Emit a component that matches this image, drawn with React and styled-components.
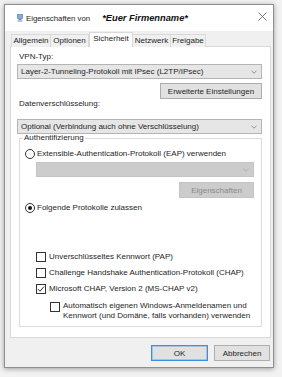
import React from "react";
import styled, { createGlobalStyle } from "styled-components";

const GlobalStyle = createGlobalStyle`
  html, body {
    margin: 0;
    padding: 0;
    background: #f2f2f2;
  }
  body {
    font-family: "Liberation Sans", Arial, sans-serif;
    font-size: 8px;
    color: #1e1e1e;
  }
`;

const Page = styled.div`
  width: 282px;
  height: 377px;
  padding: 4px 0 0 4px;
  box-sizing: border-box;
`;

const Window = styled.div`
  width: 270px;
  height: 364px;
  box-sizing: border-box;
  border: 1px solid #8f8f8f;
  box-shadow: 0 1px 5px rgba(0, 0, 0, 0.35);
  display: flex;
  flex-direction: column;
  background: #f0f0f0;
`;

const TitleBar = styled.div`
  height: 26px;
  background: #fff;
  display: flex;
  align-items: center;
  padding-left: 12px;
`;

const TitleText = styled.span`
  font-size: 7.8px;
  color: #222;
  margin-left: 3px;
`;

const TitleName = styled.span`
  font-size: 9.3px;
  font-weight: bold;
  font-style: italic;
  color: #111;
  margin-left: 12px;
`;

const CloseBox = styled.div`
  margin-left: auto;
  margin-right: 6px;
  align-self: flex-start;
  margin-top: 7px;
  width: 9px;
  height: 9px;
  display: flex;
`;

const Body = styled.div`
  flex: 1;
  display: flex;
  flex-direction: column;
  padding: 0 2px 5px 5px;
`;

const TabRow = styled.div`
  display: flex;
  align-items: flex-end;
  height: 16px;
  margin: 0 0 -1px 1px;
`;

const Tab = styled.div`
  width: ${p => p.$w}px;
  height: ${p => (p.$active ? 15 : 13)}px;
  box-sizing: border-box;
  border: 1px solid #d9d9d9;
  border-bottom: none;
  border-left: ${p => (p.$first || p.$active ? "1px solid #d9d9d9" : "none")};
  background: ${p => (p.$active ? "#fff" : "#f0f0f0")};
  position: ${p => (p.$active ? "relative" : "static")};
  z-index: ${p => (p.$active ? 1 : 0)};
  display: flex;
  align-items: center;
  justify-content: center;
  line-height: 10px;
  padding-bottom: ${p => (p.$active ? 2 : 0)}px;
  white-space: nowrap;
`;

const Panel = styled.div`
  width: 261px;
  box-sizing: border-box;
  background: #fff;
  border: 1px solid #d9d9d9;
  padding: 5px 8px 10px 6px;
  display: flex;
  flex-direction: column;
`;

const Label = styled.div`
  line-height: 10px;
  margin-left: 2px;
  margin-top: ${p => p.$mt || 0}px;
`;

const Combo = styled.div`
  height: 15px;
  box-sizing: border-box;
  margin-top: ${p => p.$mt || 0}px;
  margin-left: ${p => p.$ml || 0}px;
  width: ${p => (p.$w ? p.$w + "px" : "auto")};
  background: ${p => (p.$disabled ? "#cccccc" : "#e6e6e6")};
  border: 1px solid ${p => (p.$disabled ? "#c4c4c4" : "#b4b4b4")};
  display: flex;
  align-items: center;
  padding: 0 4px 0 3px;
  line-height: 10px;
  white-space: nowrap;
`;

const ComboText = styled.span`
  flex: 1;
`;

const Button = styled.div`
  height: 16px;
  width: ${p => p.$w}px;
  box-sizing: border-box;
  background: ${p => (p.$disabled ? "#cccccc" : "#e1e1e1")};
  color: ${p => (p.$disabled ? "#8a8a8a" : "#1e1e1e")};
  border: 1px solid ${p => (p.$default ? "#3c8ee0" : p.$disabled ? "#c4c4c4" : "#adadad")};
  box-shadow: ${p => (p.$default ? "inset 0 0 0 0.5px #6fa9e6" : "none")};
  display: flex;
  align-items: center;
  justify-content: center;
  align-self: flex-end;
  margin-top: ${p => p.$mt || 0}px;
  margin-right: ${p => p.$mr || 0}px;
  white-space: nowrap;
`;

const Group = styled.fieldset`
  margin: 0 0 0 2px;
  padding: 0 0 5px 0;
  border: 1px solid #dcdcdc;
  display: flex;
  flex-direction: column;
  min-width: 0;
`;

const Legend = styled.legend`
  margin-left: 3px;
  padding: 0 1px;
  line-height: 8px;
`;

const Row = styled.div`
  display: flex;
  align-items: ${p => (p.$top ? "flex-start" : "center")};
  height: ${p => p.$h || 10}px;
  margin-top: ${p => p.$mt || 0}px;
  margin-left: ${p => p.$ml || 0}px;
  line-height: 10px;
  white-space: nowrap;
`;

const Radio = styled.span`
  width: 10px;
  height: 10px;
  box-sizing: border-box;
  border: 1px solid #333;
  border-radius: 50%;
  margin-right: 2px;
  display: flex;
  align-items: center;
  justify-content: center;
  flex-shrink: 0;
  &::after {
    content: "";
    width: 4px;
    height: 4px;
    border-radius: 50%;
    background: ${p => (p.$checked ? "#111" : "transparent")};
  }
`;

const Check = styled.span`
  width: 10px;
  height: 10px;
  box-sizing: border-box;
  border: 1px solid #333;
  margin-right: 3px;
  margin-top: ${p => p.$mt || 0}px;
  flex-shrink: 0;
  display: flex;
  align-items: center;
  justify-content: center;
`;

const TwoLines = styled.div`
  line-height: 10px;
  padding-top: 4px;
`;

const Footer = styled.div`
  display: flex;
  justify-content: flex-end;
  gap: 6px;
  margin-top: 7px;
  padding-right: 1px;
`;

const Chevron = ({ color }) => (
  <svg width="6" height="4" viewBox="0 0 6 4">
    <path d="M0.5 0.8 L3 3.2 L5.5 0.8" fill="none" stroke={color} strokeWidth="0.8" />
  </svg>
);

const NetIcon = () => (
  <svg width="6" height="8" viewBox="0 0 6 8">
    <rect x="0.5" y="0.5" width="5" height="4" fill="#7fb0de" stroke="#4a78a8" strokeWidth="0.6" />
    <rect x="1.5" y="5" width="3" height="1.2" fill="#7a8a9a" />
    <rect x="0.5" y="6.4" width="5" height="1.2" fill="#9aa6b2" />
  </svg>
);

const CheckBox = ({ checked, mt }) => (
  <Check $mt={mt}>
    {checked && (
      <svg width="8" height="8" viewBox="0 0 8 8">
        <path d="M1 4.2 L3 6.2 L7 1.6" fill="none" stroke="#111" strokeWidth="0.9" />
      </svg>
    )}
  </Check>
);

const tabs = [
  { label: "Allgemein", w: 40 },
  { label: "Optionen", w: 38 },
  { label: "Sicherheit", w: 44, active: true },
  { label: "Netzwerk", w: 38 },
  { label: "Freigabe", w: 35 },
];

export default function App() {
  return (
    <Page>
      <GlobalStyle />
      <Window>
        <TitleBar>
          <NetIcon />
          <TitleText>Eigenschaften von</TitleText>
          <TitleName>*Euer Firmenname*</TitleName>
          <CloseBox>
            <svg width="9" height="9" viewBox="0 0 9 9">
              <path d="M0.5 0.5 L8.5 8.5 M8.5 0.5 L0.5 8.5" stroke="#555" strokeWidth="0.8" />
            </svg>
          </CloseBox>
        </TitleBar>
        <Body>
          <TabRow>
            {tabs.map((t, i) => (
              <Tab key={t.label} $w={t.w} $active={t.active} $first={i === 0}>
                {t.label}
              </Tab>
            ))}
          </TabRow>
          <Panel>
            <Label>VPN-Typ:</Label>
            <Combo $mt={2}>
              <ComboText>Layer-2-Tunneling-Protokoll mit IPsec (L2TP/IPsec)</ComboText>
              <Chevron color="#777" />
            </Combo>
            <Button $w={102} $mt={4}>Erweiterte Einstellungen</Button>
            <Label>Datenverschlüsselung:</Label>
            <Combo $mt={10}>
              <ComboText>Optional (Verbindung auch ohne Verschlüsselung)</ComboText>
              <Chevron color="#777" />
            </Combo>
            <Group>
              <Legend>Authentifizierung</Legend>
              <Row $mt={7} $ml={5}>
                <Radio />
                Extensible-Authentication-Protokoll (EAP) verwenden
              </Row>
              <Combo $mt={3} $ml={16} $w={218} $disabled>
                <ComboText />
                <Chevron color="#aaa" />
              </Combo>
              <Button $w={75} $mt={5} $mr={7} $disabled>Eigenschaften</Button>
              <Row $mt={5} $ml={5}>
                <Radio $checked />
                Folgende Protokolle zulassen
              </Row>
              <Row $h={16} $mt={36} $ml={16}>
                <CheckBox />
                Unverschlüsseltes Kennwort (PAP)
              </Row>
              <Row $h={16} $ml={16}>
                <CheckBox />
                Challenge Handshake Authentication-Protokoll (CHAP)
              </Row>
              <Row $h={16} $ml={16}>
                <CheckBox checked />
                Microsoft CHAP, Version 2 (MS-CHAP v2)
              </Row>
              <Row $h={24} $ml={30} $top>
                <CheckBox mt={5} />
                <TwoLines>
                  Automatisch eigenen Windows-Anmeldenamen und
                  <br />
                  Kennwort (und Domäne, falls vorhanden) verwenden
                </TwoLines>
              </Row>
            </Group>
          </Panel>
          <Footer>
            <Button $w={57} $default>OK</Button>
            <Button $w={56}>Abbrechen</Button>
          </Footer>
        </Body>
      </Window>
    </Page>
  );
}
